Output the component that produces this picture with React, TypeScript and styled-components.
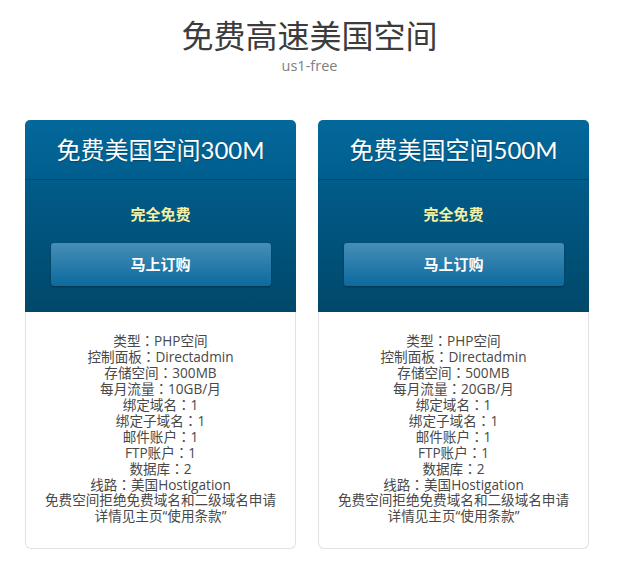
import React from 'react';
import styled, { createGlobalStyle } from 'styled-components';

const GlobalStyle = createGlobalStyle`
  body {
    margin: 0;
    background: #ffffff;
    font-family: 'Open Sans', 'Noto Sans CJK SC', sans-serif;
  }
`;

const Page = styled.div`
  width: 619px;
  padding-top: 15px;
`;

const Heading = styled.div`
  text-align: center;
`;

const Title = styled.h1`
  margin: 0;
  font-family: 'Noto Sans CJK SC', sans-serif;
  font-size: 32px;
  font-weight: 400;
  line-height: 38px;
  color: #3c3c3c;
`;

const SubTitle = styled.div`
  margin-top: 3px;
  font-family: 'Open Sans', 'Noto Sans CJK SC', sans-serif;
  font-size: 14.5px;
  line-height: 20px;
  color: #808080;
`;

const Plans = styled.div`
  display: flex;
  gap: 22px;
  padding: 44px 0 0 25px;
`;

const Card = styled.div`
  position: relative;
  width: 271px;
  display: flex;
  flex-direction: column;

  &::after {
    content: '';
    position: absolute;
    left: 40px;
    right: 28px;
    bottom: -3px;
    height: 3px;
    border-radius: 0 0 50% 50%;
    background: linear-gradient(
      to right,
      rgba(0, 0, 0, 0.05),
      rgba(0, 0, 0, 0.3) 60%,
      rgba(0, 0, 0, 0.4) 85%,
      rgba(0, 0, 0, 0)
    );
  }
`;

const CardHead = styled.div`
  height: 59px;
  display: flex;
  align-items: center;
  justify-content: center;
  border-radius: 5px 5px 0 0;
  background: linear-gradient(#04689b, #005e8d);
  border-bottom: 1px solid #004a6e;
`;

const PlanName = styled.h2`
  margin: 0 0 3px;
  font-family: 'Lato', 'Noto Sans CJK SC', sans-serif;
  font-size: 24px;
  font-weight: 400;
  color: #ffffff;
  text-shadow: 0 1px 1px rgba(0, 0, 0, 0.25);
`;

const PricePanel = styled.div`
  height: 132px;
  display: flex;
  flex-direction: column;
  align-items: center;
  background: linear-gradient(#005c89, #00486a);
`;

const Price = styled.div`
  margin-top: 23px;
  font-family: 'Noto Sans CJK SC', sans-serif;
  font-size: 15px;
  font-weight: 700;
  line-height: 22px;
  color: #f4f0a2;
`;

const OrderButton = styled.button`
  margin-top: 18px;
  width: 220px;
  height: 43px;
  border: none;
  border-radius: 3px;
  background: linear-gradient(#468eb6, #0c6a9e);
  box-shadow: 0 1px 2px rgba(0, 0, 0, 0.35);
  font-family: 'Noto Sans CJK SC', sans-serif;
  font-size: 15px;
  font-weight: 700;
  line-height: 20px;
  padding: 0 0 2px;
  color: #ffffff;
  cursor: pointer;
`;

const Features = styled.ul`
  box-sizing: border-box;
  margin: 0;
  height: 237px;
  list-style: none;
  padding: 20px 0 0;
  border: 1px solid #e2e2e2;
  border-top: none;
  border-radius: 0 0 6px 6px;
  background: #ffffff;
  text-align: center;
  font-family: 'Open Sans', 'Noto Sans CJK SC', sans-serif;
  font-size: 13.6px;
  line-height: 16px;
  color: #484848;
`;

const Feature = styled.li`
  height: 16px;
  white-space: nowrap;
`;

// full-width colon sits in the middle of its cell, as in a TC font
const Colon = styled.span`
  font-family: 'Noto Sans CJK TC', sans-serif;
`;

const plans = [
  {
    name: '免费美国空间300M',
    features: [
      '类型：PHP空间',
      '控制面板：Directadmin',
      '存储空间：300MB',
      '每月流量：10GB/月',
      '绑定域名：1',
      '绑定子域名：1',
      '邮件账户：1',
      'FTP账户：1',
      '数据库：2',
      '线路：美国Hostigation',
      '免费空间拒绝免费域名和二级域名申请',
      '详情见主页“使用条款”'
    ]
  },
  {
    name: '免费美国空间500M',
    features: [
      '类型：PHP空间',
      '控制面板：Directadmin',
      '存储空间：500MB',
      '每月流量：20GB/月',
      '绑定域名：1',
      '绑定子域名：1',
      '邮件账户：1',
      'FTP账户：1',
      '数据库：2',
      '线路：美国Hostigation',
      '免费空间拒绝免费域名和二级域名申请',
      '详情见主页“使用条款”'
    ]
  }
];

const renderLine = (text: string) => {
  const [label, value] = text.split('：');
  if (value === undefined) return text;
  return (
    <>
      {label}
      <Colon>：</Colon>
      {value}
    </>
  );
};

const App: React.FC = () => (
  <Page>
    <GlobalStyle />
    <Heading>
      <Title>免费高速美国空间</Title>
      <SubTitle>us1-free</SubTitle>
    </Heading>

    <Plans>
      {plans.map((plan) => (
        <Card key={plan.name}>
          <CardHead>
            <PlanName>{plan.name}</PlanName>
          </CardHead>
          <PricePanel>
            <Price>完全免费</Price>
            <OrderButton>马上订购</OrderButton>
          </PricePanel>
          <Features>
            {plan.features.map((item) => (
              <Feature key={item}>{renderLine(item)}</Feature>
            ))}
          </Features>
        </Card>
      ))}
    </Plans>
  </Page>
);

export default App;
